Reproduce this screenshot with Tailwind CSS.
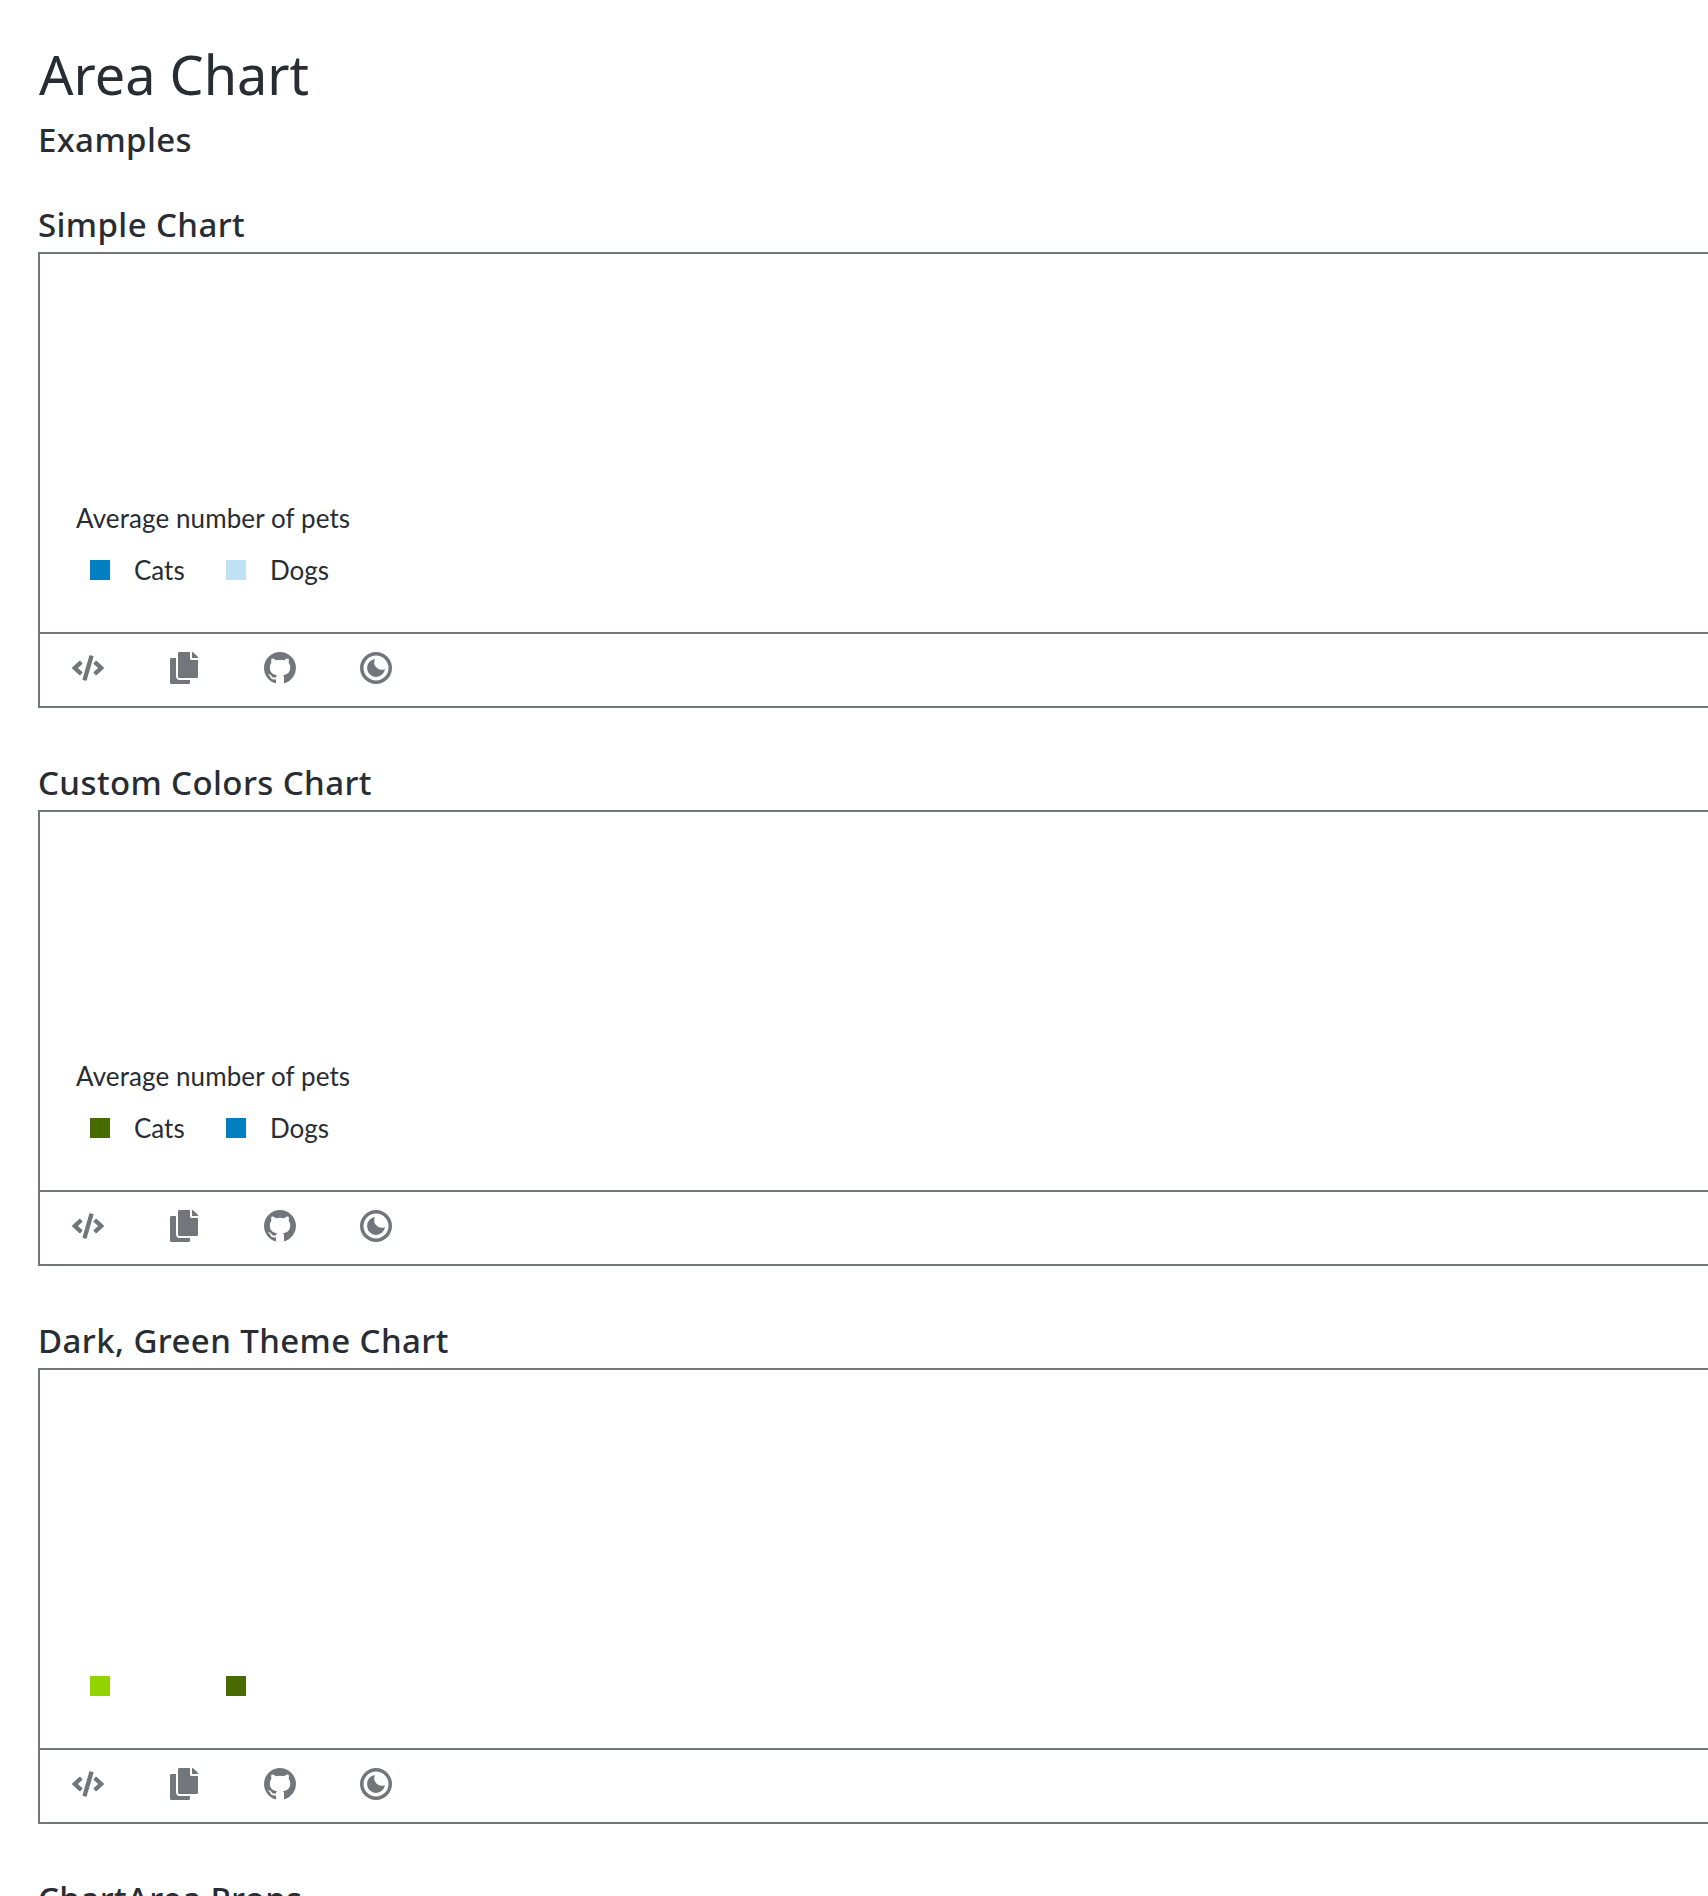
<!DOCTYPE html>
<html><head><meta charset="utf-8"><script src="https://cdn.jsdelivr.net/npm/@tailwindcss/browser@4"></script></head>
<body class="bg-white h-[1896px] overflow-hidden font-['Noto_Sans',sans-serif] text-[#282d33]">
<main class="pl-[38px] w-[1708px] overflow-hidden">
<h1 class="pl-[1px] pt-[43px] h-[114px] text-[54px] leading-[62px] font-normal">Area Chart</h1>
<h2 class="h-[56px] text-[33px] leading-[52px] font-medium tracking-[0.4px]">Examples</h2>
<section class="h-[558px]">
<h3 class="h-[82px] pt-[30px] text-[33px] leading-[50px] font-medium tracking-[0.4px]">Simple Chart</h3>
<div class="border-2 border-[#72767b] w-[1800px]">
<div class="h-[378px] flex flex-col justify-end pl-[36px] pb-[46px] font-['Lato',sans-serif]">
<p class="text-[26px] tracking-[0.1px] leading-[32px] h-[52px]">Average number of pets</p>
<div class="flex items-center h-[32px] text-[26px] pl-[14px]"><span class="w-[20px] h-[20px] bg-[#0080c0]"></span><span class="ml-[24px] w-[92px]">Cats</span><span class="w-[20px] h-[20px] bg-[#bee1f4]"></span><span class="ml-[24px]">Dogs</span></div>
</div>
<div class="border-t-2 border-[#72767b] h-[74px] pt-[18px] flex text-[#72767b]">
<button class="w-[96px] h-[32px] flex items-center justify-center"><svg class="w-[32px] h-[26px]" viewBox="0 0 640 512" fill="currentColor"><path d="M278.9 511.5l-61-17.7c-6.4-1.8-10-8.5-8.2-14.9L346.2 8.7c1.8-6.4 8.5-10 14.9-8.2l61 17.7c6.4 1.8 10 8.5 8.2 14.9L293.8 503.3c-1.9 6.4-8.5 10.1-14.9 8.2zm-114-112.2l43.5-46.4c4.6-4.9 4.3-12.7-.8-17.2L117 256l90.6-79.7c5.1-4.5 5.5-12.3.8-17.2l-43.5-46.4c-4.5-4.8-12.1-5.1-17-.5L3.8 247.2c-5.1 4.7-5.1 12.8 0 17.5l144.1 135.1c4.9 4.6 12.5 4.4 17-.5zm327.2.6l144.1-135.1c5.1-4.7 5.1-12.8 0-17.5L492.1 112.1c-4.8-4.5-12.4-4.3-17 .5L431.6 159c-4.6 4.9-4.3 12.7.8 17.2L523 256l-90.6 79.7c-5.1 4.5-5.5 12.3-.8 17.2l43.5 46.4c4.5 4.9 12.1 5.1 17 .6z"/></svg></button>
<button class="w-[96px] h-[32px] flex items-center justify-center"><svg class="w-[28px] h-[32px]" viewBox="0 0 448 512" fill="currentColor"><path d="M320 448v40c0 13.255-10.745 24-24 24H24c-13.255 0-24-10.745-24-24V120c0-13.255 10.745-24 24-24h72v296c0 30.879 25.121 56 56 56h168zm0-344V0H152c-13.255 0-24 10.745-24 24v368c0 13.255 10.745 24 24 24h272c13.255 0 24-10.745 24-24V128H344c-13.2 0-24-10.8-24-24zm120.971-31.029L375.029 7.029A24 24 0 0 0 358.059 0H352v96h96v-6.059a24 24 0 0 0-7.029-16.97z"/></svg></button>
<button class="w-[96px] h-[32px] flex items-center justify-center"><svg class="w-[32px] h-[32px]" viewBox="0 0 16 16" fill="currentColor"><path d="M8 0C3.58 0 0 3.58 0 8c0 3.54 2.29 6.53 5.47 7.59.4.07.55-.17.55-.38 0-.19-.01-.82-.01-1.49-2.01.37-2.53-.49-2.69-.94-.09-.23-.48-.94-.82-1.13-.28-.15-.68-.52-.01-.53.63-.01 1.08.58 1.23.82.72 1.21 1.87.87 2.33.66.07-.52.28-.87.51-1.07-1.78-.2-3.64-.89-3.64-3.95 0-.87.31-1.59.82-2.15-.08-.2-.36-1.02.08-2.12 0 0 .67-.21 2.2.82.64-.18 1.32-.27 2-.27.68 0 1.36.09 2 .27 1.53-1.04 2.2-.82 2.2-.82.44 1.1.16 1.92.08 2.12.51.56.82 1.27.82 2.15 0 3.07-1.87 3.75-3.65 3.95.29.25.54.73.54 1.48 0 1.07-.01 1.93-.01 2.2 0 .21.15.46.55.38A8.013 8.013 0 0016 8c0-4.42-3.58-8-8-8z"/></svg></button>
<button class="w-[96px] h-[32px] flex items-center justify-center"><svg class="w-[32px] h-[32px]" viewBox="0 0 32 32" fill="currentColor"><path fill-rule="evenodd" d="M16 0a16 16 0 1 0 0 32a16 16 0 0 0 0-32zm0 3.5a12.5 12.5 0 1 1 0 25a12.5 12.5 0 0 1 0-25z"/><path d="M15 7A9 9 0 1 0 25 17A7.5 7.5 0 0 1 15 7z"/></svg></button>
</div></div></section>
<section class="h-[558px]">
<h3 class="h-[82px] pt-[30px] text-[33px] leading-[50px] font-medium tracking-[0.4px]">Custom Colors Chart</h3>
<div class="border-2 border-[#72767b] w-[1800px]">
<div class="h-[378px] flex flex-col justify-end pl-[36px] pb-[46px] font-['Lato',sans-serif]">
<p class="text-[26px] tracking-[0.1px] leading-[32px] h-[52px]">Average number of pets</p>
<div class="flex items-center h-[32px] text-[26px] pl-[14px]"><span class="w-[20px] h-[20px] bg-[#486b00]"></span><span class="ml-[24px] w-[92px]">Cats</span><span class="w-[20px] h-[20px] bg-[#0080c0]"></span><span class="ml-[24px]">Dogs</span></div>
</div>
<div class="border-t-2 border-[#72767b] h-[74px] pt-[18px] flex text-[#72767b]">
<button class="w-[96px] h-[32px] flex items-center justify-center"><svg class="w-[32px] h-[26px]" viewBox="0 0 640 512" fill="currentColor"><path d="M278.9 511.5l-61-17.7c-6.4-1.8-10-8.5-8.2-14.9L346.2 8.7c1.8-6.4 8.5-10 14.9-8.2l61 17.7c6.4 1.8 10 8.5 8.2 14.9L293.8 503.3c-1.9 6.4-8.5 10.1-14.9 8.2zm-114-112.2l43.5-46.4c4.6-4.9 4.3-12.7-.8-17.2L117 256l90.6-79.7c5.1-4.5 5.5-12.3.8-17.2l-43.5-46.4c-4.5-4.8-12.1-5.1-17-.5L3.8 247.2c-5.1 4.7-5.1 12.8 0 17.5l144.1 135.1c4.9 4.6 12.5 4.4 17-.5zm327.2.6l144.1-135.1c5.1-4.7 5.1-12.8 0-17.5L492.1 112.1c-4.8-4.5-12.4-4.3-17 .5L431.6 159c-4.6 4.9-4.3 12.7.8 17.2L523 256l-90.6 79.7c-5.1 4.5-5.5 12.3-.8 17.2l43.5 46.4c4.5 4.9 12.1 5.1 17 .6z"/></svg></button>
<button class="w-[96px] h-[32px] flex items-center justify-center"><svg class="w-[28px] h-[32px]" viewBox="0 0 448 512" fill="currentColor"><path d="M320 448v40c0 13.255-10.745 24-24 24H24c-13.255 0-24-10.745-24-24V120c0-13.255 10.745-24 24-24h72v296c0 30.879 25.121 56 56 56h168zm0-344V0H152c-13.255 0-24 10.745-24 24v368c0 13.255 10.745 24 24 24h272c13.255 0 24-10.745 24-24V128H344c-13.2 0-24-10.8-24-24zm120.971-31.029L375.029 7.029A24 24 0 0 0 358.059 0H352v96h96v-6.059a24 24 0 0 0-7.029-16.97z"/></svg></button>
<button class="w-[96px] h-[32px] flex items-center justify-center"><svg class="w-[32px] h-[32px]" viewBox="0 0 16 16" fill="currentColor"><path d="M8 0C3.58 0 0 3.58 0 8c0 3.54 2.29 6.53 5.47 7.59.4.07.55-.17.55-.38 0-.19-.01-.82-.01-1.49-2.01.37-2.53-.49-2.69-.94-.09-.23-.48-.94-.82-1.13-.28-.15-.68-.52-.01-.53.63-.01 1.08.58 1.23.82.72 1.21 1.87.87 2.33.66.07-.52.28-.87.51-1.07-1.78-.2-3.64-.89-3.64-3.95 0-.87.31-1.59.82-2.15-.08-.2-.36-1.02.08-2.12 0 0 .67-.21 2.2.82.64-.18 1.32-.27 2-.27.68 0 1.36.09 2 .27 1.53-1.04 2.2-.82 2.2-.82.44 1.1.16 1.92.08 2.12.51.56.82 1.27.82 2.15 0 3.07-1.87 3.75-3.65 3.95.29.25.54.73.54 1.48 0 1.07-.01 1.93-.01 2.2 0 .21.15.46.55.38A8.013 8.013 0 0016 8c0-4.42-3.58-8-8-8z"/></svg></button>
<button class="w-[96px] h-[32px] flex items-center justify-center"><svg class="w-[32px] h-[32px]" viewBox="0 0 32 32" fill="currentColor"><path fill-rule="evenodd" d="M16 0a16 16 0 1 0 0 32a16 16 0 0 0 0-32zm0 3.5a12.5 12.5 0 1 1 0 25a12.5 12.5 0 0 1 0-25z"/><path d="M15 7A9 9 0 1 0 25 17A7.5 7.5 0 0 1 15 7z"/></svg></button>
</div></div></section>
<section class="h-[558px]">
<h3 class="h-[82px] pt-[30px] text-[33px] leading-[50px] font-medium tracking-[0.4px]">Dark, Green Theme Chart</h3>
<div class="border-2 border-[#72767b] w-[1800px]">
<div class="h-[378px] flex flex-col justify-end pl-[36px] pb-[46px] font-['Lato',sans-serif]">
<div class="flex items-center h-[32px] text-[26px] pl-[14px]"><span class="w-[20px] h-[20px] bg-[#92d400]"></span><span class="ml-[24px] w-[92px]"></span><span class="w-[20px] h-[20px] bg-[#486b00]"></span></div>
</div>
<div class="border-t-2 border-[#72767b] h-[74px] pt-[18px] flex text-[#72767b]">
<button class="w-[96px] h-[32px] flex items-center justify-center"><svg class="w-[32px] h-[26px]" viewBox="0 0 640 512" fill="currentColor"><path d="M278.9 511.5l-61-17.7c-6.4-1.8-10-8.5-8.2-14.9L346.2 8.7c1.8-6.4 8.5-10 14.9-8.2l61 17.7c6.4 1.8 10 8.5 8.2 14.9L293.8 503.3c-1.9 6.4-8.5 10.1-14.9 8.2zm-114-112.2l43.5-46.4c4.6-4.9 4.3-12.7-.8-17.2L117 256l90.6-79.7c5.1-4.5 5.5-12.3.8-17.2l-43.5-46.4c-4.5-4.8-12.1-5.1-17-.5L3.8 247.2c-5.1 4.7-5.1 12.8 0 17.5l144.1 135.1c4.9 4.6 12.5 4.4 17-.5zm327.2.6l144.1-135.1c5.1-4.7 5.1-12.8 0-17.5L492.1 112.1c-4.8-4.5-12.4-4.3-17 .5L431.6 159c-4.6 4.9-4.3 12.7.8 17.2L523 256l-90.6 79.7c-5.1 4.5-5.5 12.3-.8 17.2l43.5 46.4c4.5 4.9 12.1 5.1 17 .6z"/></svg></button>
<button class="w-[96px] h-[32px] flex items-center justify-center"><svg class="w-[28px] h-[32px]" viewBox="0 0 448 512" fill="currentColor"><path d="M320 448v40c0 13.255-10.745 24-24 24H24c-13.255 0-24-10.745-24-24V120c0-13.255 10.745-24 24-24h72v296c0 30.879 25.121 56 56 56h168zm0-344V0H152c-13.255 0-24 10.745-24 24v368c0 13.255 10.745 24 24 24h272c13.255 0 24-10.745 24-24V128H344c-13.2 0-24-10.8-24-24zm120.971-31.029L375.029 7.029A24 24 0 0 0 358.059 0H352v96h96v-6.059a24 24 0 0 0-7.029-16.97z"/></svg></button>
<button class="w-[96px] h-[32px] flex items-center justify-center"><svg class="w-[32px] h-[32px]" viewBox="0 0 16 16" fill="currentColor"><path d="M8 0C3.58 0 0 3.58 0 8c0 3.54 2.29 6.53 5.47 7.59.4.07.55-.17.55-.38 0-.19-.01-.82-.01-1.49-2.01.37-2.53-.49-2.69-.94-.09-.23-.48-.94-.82-1.13-.28-.15-.68-.52-.01-.53.63-.01 1.08.58 1.23.82.72 1.21 1.87.87 2.33.66.07-.52.28-.87.51-1.07-1.78-.2-3.64-.89-3.64-3.95 0-.87.31-1.59.82-2.15-.08-.2-.36-1.02.08-2.12 0 0 .67-.21 2.2.82.64-.18 1.32-.27 2-.27.68 0 1.36.09 2 .27 1.53-1.04 2.2-.82 2.2-.82.44 1.1.16 1.92.08 2.12.51.56.82 1.27.82 2.15 0 3.07-1.87 3.75-3.65 3.95.29.25.54.73.54 1.48 0 1.07-.01 1.93-.01 2.2 0 .21.15.46.55.38A8.013 8.013 0 0016 8c0-4.42-3.58-8-8-8z"/></svg></button>
<button class="w-[96px] h-[32px] flex items-center justify-center"><svg class="w-[32px] h-[32px]" viewBox="0 0 32 32" fill="currentColor"><path fill-rule="evenodd" d="M16 0a16 16 0 1 0 0 32a16 16 0 0 0 0-32zm0 3.5a12.5 12.5 0 1 1 0 25a12.5 12.5 0 0 1 0-25z"/><path d="M15 7A9 9 0 1 0 25 17A7.5 7.5 0 0 1 15 7z"/></svg></button>
</div></div></section>
<h3 class="h-[82px] pt-[30px] text-[33px] leading-[50px] font-medium tracking-[0.4px]">ChartArea Props</h3>
</main>
</body></html>
